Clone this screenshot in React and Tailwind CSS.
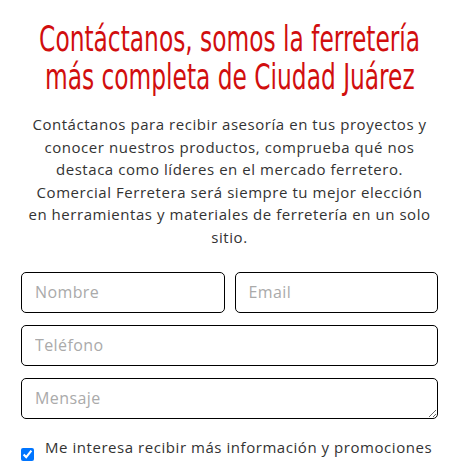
const field =
  "h-[41px] border border-black rounded-[5px] px-[13px] text-[16px] tracking-[0.4px] text-[#333333] placeholder:text-[#aaaaaa] outline-none bg-white";

export default function App() {
  return (
    <div className="w-[468px] h-[471px] bg-white overflow-hidden pl-[21px] pr-[30px]">
      {/* Heading */}
      <h1 className="pt-[20px] text-[#d10e0e] text-[36px] leading-[38px] font-['DejaVu_Sans_Condensed','DejaVu_Sans',sans-serif]">
        <div className="flex justify-center">
          <span className="shrink-0 whitespace-nowrap scale-x-[0.72]">
            Contáctanos, somos la ferretería
          </span>
        </div>
        <div className="flex justify-center">
          <span className="shrink-0 whitespace-nowrap scale-x-[0.72]">
            más completa de Ciudad Juárez
          </span>
        </div>
      </h1>

      <p className="mt-[17px] text-center text-[#333333] text-[15px] leading-[22.6px] tracking-[0.55px] font-['Open_Sans',sans-serif]">
        Contáctanos para recibir asesoría en tus proyectos y
        <br />
        conocer nuestros productos, comprueba qué nos
        <br />
        destaca como líderes en el mercado ferretero.
        <br />
        Comercial Ferretera será siempre tu mejor elección
        <br />
        en herramientas y materiales de ferretería en un solo
        <br />
        sitio.
      </p>

      {/* Form */}
      <form className="mt-[23px] flex flex-col gap-[12px] font-['Open_Sans',sans-serif]">
        <div className="flex gap-[10px]">
          <input type="text" placeholder="Nombre" className={`flex-1 min-w-0 ${field}`} />
          <input type="email" placeholder="Email" className={`flex-1 min-w-0 ${field}`} />
        </div>
        <input type="tel" placeholder="Teléfono" className={field} />
        <textarea placeholder="Mensaje" className={`${field} py-[7px] leading-[24px] block`} />
        <label className="mt-[6px] flex items-start gap-[11px] text-[15px] leading-[20px] tracking-[0.55px] text-[#333333]">
          <input
            type="checkbox"
            defaultChecked
            className="mt-[11px] w-[13px] h-[13px] shrink-0 accent-[#0075ff]"
          />
          <span>Me interesa recibir más información y promociones</span>
        </label>
      </form>
    </div>
  );
}
